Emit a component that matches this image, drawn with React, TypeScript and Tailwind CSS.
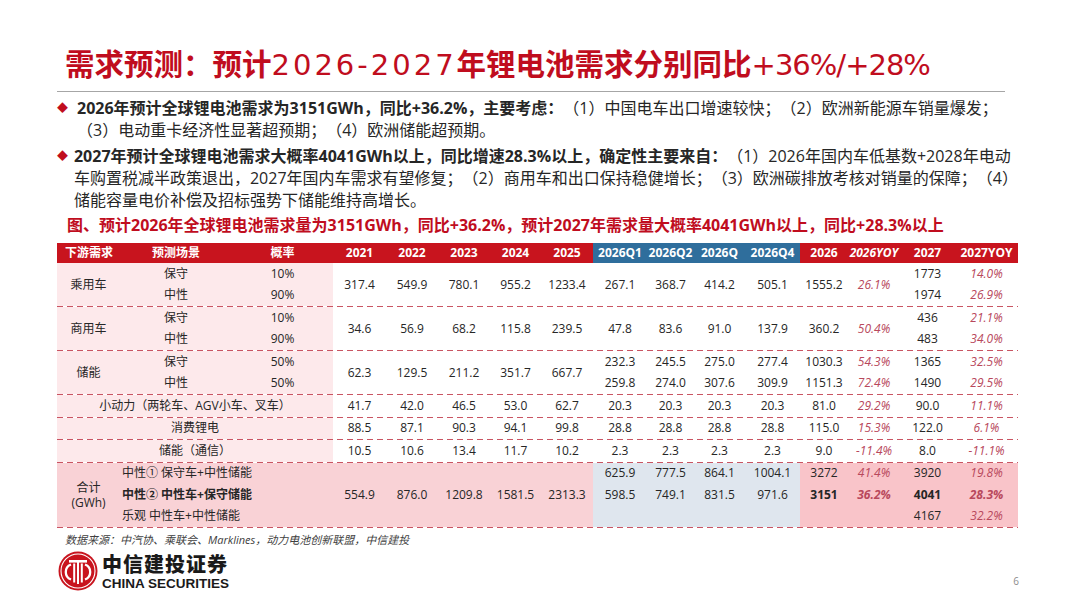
const header = [
  "下游需求", "预测场景", "概率", "2021", "2022", "2023", "2024", "2025",
  "2026Q1", "2026Q2", "2026Q", "2026Q4", "2026", "2026YOY", "2027", "2027YOY",
];

const widths = [
  "w-[63px]", "w-[112px]", "w-[101px]", "w-[53px]", "w-[52px]", "w-[52px]", "w-[51px]", "w-[52px]",
  "w-[54px]", "w-[47px]", "w-[51px]", "w-[55px]", "w-[48px]", "w-[52px]", "w-[55px]", "w-[63px]",
];

const label = "bg-[#fde9eb]";
const yoy = "italic text-[#b8485c]";
const row = "h-[21.5px]";

function Divider() {
  return (
    <tr>
      <td
        colSpan={16}
        className="p-0 h-px bg-[repeating-linear-gradient(90deg,#c95563_0_6px,transparent_6px_10px)]"
      />
    </tr>
  );
}

function Cell({ v, cls = "", span = 1 }: { v: string; cls?: string; span?: number }) {
  return (
    <td rowSpan={span} className={`p-0 text-center whitespace-nowrap ${cls}`}>
      {v}
    </td>
  );
}

function CarGroup({
  name,
  probs,
  merged,
  y27,
  yoy27,
}: {
  name: string;
  probs: string[];
  merged: string[];
  y27: string[];
  yoy27: string[];
}) {
  return (
    <>
      <tr className={row}>
        <Cell v={name} span={2} cls={label} />
        <Cell v="保守" cls={label} />
        <Cell v={probs[0]} cls={label} />
        {merged.map((m, i) => (
          <Cell key={i} v={m} span={2} cls={i === 10 ? yoy : ""} />
        ))}
        <Cell v={y27[0]} />
        <Cell v={yoy27[0]} cls={yoy} />
      </tr>
      <tr className={row}>
        <Cell v="中性" cls={label} />
        <Cell v={probs[1]} cls={label} />
        <Cell v={y27[1]} />
        <Cell v={yoy27[1]} cls={yoy} />
      </tr>
      <Divider />
    </>
  );
}

function SingleRow({ name, vals }: { name: string; vals: string[] }) {
  return (
    <>
      <tr className={row}>
        <td colSpan={3} className={`p-0 text-center ${label}`}>{name}</td>
        {vals.map((v, i) => (
          <Cell key={i} v={v} cls={i === 10 || i === 12 ? yoy : ""} />
        ))}
      </tr>
      <Divider />
    </>
  );
}

function Logo() {
  return (
    <svg width="42" height="40" viewBox="0 0 40 40">
      <circle cx="20" cy="20" r="19.5" fill="#c8141e" />
      <circle cx="20" cy="20" r="17" fill="none" stroke="#fff" strokeWidth="1.1" />
      <rect x="11" y="9" width="18" height="2.6" fill="#fff" />
      <rect x="15.2" y="12.5" width="2" height="19" fill="#fff" />
      <rect x="19" y="11" width="2" height="22" fill="#fff" />
      <rect x="22.8" y="12.5" width="2" height="19" fill="#fff" />
      <path d="M13 13.5 A8 8 0 0 0 13 28.5" fill="none" stroke="#fff" strokeWidth="2.3" />
      <path d="M27 13.5 A8 8 0 0 1 27 28.5" fill="none" stroke="#fff" strokeWidth="2.3" />
    </svg>
  );
}

export default function App() {
  return (
    <div className="w-[1080px] h-[608px] bg-white overflow-hidden flex flex-col pl-[57px] pr-[62px] font-['Open_Sans','Noto_Sans_CJK_SC',sans-serif] text-[#262626] [text-spacing-trim:space-all]">
      {/* title */}
      <h1 className="mt-[44px] ml-[8px] h-[36px] leading-[36px] text-[29.5px] font-bold text-[#c00d1e] whitespace-nowrap font-['Noto_Sans_CJK_SC',sans-serif]">
        需求预测：预计
        <span className="font-normal font-['DejaVu_Sans',sans-serif] text-[29px] tracking-[3px]">2026-2027</span>
        年锂电池需求分别同比
        <span className="font-normal font-['DejaVu_Sans',sans-serif] text-[29px] tracking-[-1px]">+36%/+28%</span>
      </h1>
      <div className="mt-[11px] w-[948px] h-px bg-[#a6a6a6]" />

      {/* bullets */}
      <div className="mt-[5px] flex">
        <span className="w-[20px] leading-[22px] text-[11px] text-[#c00d1e]">◆</span>
        <div className="text-[16px] leading-[22px] whitespace-nowrap">
          <div>
            <b>2026年预计全球锂电池需求为3151GWh，同比+36.2%，主要考虑：</b>
            （1）中国电车出口增速较快；（2）欧洲新能源车销量爆发；
          </div>
          <div>（3）电动重卡经济性显著超预期；（4）欧洲储能超预期。</div>
        </div>
      </div>
      <div className="mt-[4px] flex">
        <span className="w-[20px] leading-[22px] text-[11px] text-[#c00d1e]">◆</span>
        <div className="text-[16px] leading-[22px] whitespace-nowrap">
          <div>
            <b>2027年预计全球锂电池需求大概率4041GWh以上，同比增速28.3%以上，确定性主要来自：</b>
            （1）2026年国内车低基数+2028年电动
          </div>
          <div>
            车购置税减半政策退出，2027年国内车需求有望修复；（2）商用车和出口保持稳健增长；（3）欧洲碳排放考核对销量的保障；（4）
          </div>
          <div>储能容量电价补偿及招标强势下储能维持高增长。</div>
        </div>
      </div>
      <div className="mt-[3px] ml-[10px] text-[16px] leading-[22px] font-bold text-[#c00d1e] whitespace-nowrap">
        图、预计2026年全球锂电池需求量为3151GWh，同比+36.2%，预计2027年需求量大概率4041GWh以上，同比+28.3%以上
      </div>

      {/* table */}
      <table className="mt-[7px] w-[961px] table-fixed border-collapse text-[12px] leading-none">
        <colgroup>
          {widths.map((w, i) => (
            <col key={i} className={w} />
          ))}
        </colgroup>
        <thead>
          <tr className="h-[20px] text-white font-bold">
            {header.map((h, i) => (
              <th
                key={i}
                className={`p-0 font-bold whitespace-nowrap overflow-hidden ${
                  i >= 8 && i <= 11 ? "bg-[#2f6e9c]" : "bg-[#c8141e]"
                } ${i === 0 ? "text-left pl-[8px]" : "text-center"} ${i === 13 ? "italic text-clip" : ""}`}
              >
                {h}
              </th>
            ))}
          </tr>
        </thead>
        <tbody>
          <CarGroup
            name="乘用车"
            probs={["10%", "90%"]}
            merged={["317.4", "549.9", "780.1", "955.2", "1233.4", "267.1", "368.7", "414.2", "505.1", "1555.2", "26.1%"]}
            y27={["1773", "1974"]}
            yoy27={["14.0%", "26.9%"]}
          />
          <CarGroup
            name="商用车"
            probs={["10%", "90%"]}
            merged={["34.6", "56.9", "68.2", "115.8", "239.5", "47.8", "83.6", "91.0", "137.9", "360.2", "50.4%"]}
            y27={["436", "483"]}
            yoy27={["21.1%", "34.0%"]}
          />

          {/* 储能 */}
          <tr className={row}>
            <Cell v="储能" span={2} cls={label} />
            <Cell v="保守" cls={label} />
            <Cell v="50%" cls={label} />
            {["62.3", "129.5", "211.2", "351.7", "667.7"].map((m, i) => (
              <Cell key={i} v={m} span={2} />
            ))}
            {["232.3", "245.5", "275.0", "277.4", "1030.3", "54.3%", "1365", "32.5%"].map((m, i) => (
              <Cell key={i} v={m} cls={i === 5 || i === 7 ? yoy : ""} />
            ))}
          </tr>
          <tr className={row}>
            <Cell v="中性" cls={label} />
            <Cell v="50%" cls={label} />
            {["259.8", "274.0", "307.6", "309.9", "1151.3", "72.4%", "1490", "29.5%"].map((m, i) => (
              <Cell key={i} v={m} cls={i === 5 || i === 7 ? yoy : ""} />
            ))}
          </tr>
          <Divider />

          <SingleRow
            name="小动力（两轮车、AGV小车、叉车）"
            vals={["41.7", "42.0", "46.5", "53.0", "62.7", "20.3", "20.3", "20.3", "20.3", "81.0", "29.2%", "90.0", "11.1%"]}
          />
          <SingleRow
            name="消费锂电"
            vals={["88.5", "87.1", "90.3", "94.1", "99.8", "28.8", "28.8", "28.8", "28.8", "115.0", "15.3%", "122.0", "6.1%"]}
          />
          <SingleRow
            name="储能（通信）"
            vals={["10.5", "10.6", "13.4", "11.7", "10.2", "2.3", "2.3", "2.3", "2.3", "9.0", "-11.4%", "8.0", "-11.1%"]}
          />

          {/* 合计 */}
          <tr className={row}>
            <td rowSpan={3} className="p-0 text-center bg-[#f9d2d6] leading-[15px]">
              合计
              <br />
              (GWh)
            </td>
            <td colSpan={2} className="p-0 pl-[2px] bg-[#f9d2d6] whitespace-nowrap">中性① 保守车+中性储能</td>
            {["554.9", "876.0", "1209.8", "1581.5", "2313.3"].map((m, i) => (
              <Cell key={i} v={m} span={3} cls="bg-[#f9d2d6]" />
            ))}
            {["625.9", "777.5", "864.1", "1004.1"].map((m, i) => (
              <Cell key={i} v={m} cls="bg-[#dfe6ee]" />
            ))}
            <Cell v="3272" cls="bg-[#f9c4c9]" />
            <Cell v="41.4%" cls={`bg-[#f9c4c9] ${yoy}`} />
            <Cell v="3920" cls="bg-[#f9c4c9]" />
            <Cell v="19.8%" cls={`bg-[#f9c4c9] ${yoy}`} />
          </tr>
          <tr className={row}>
            <td colSpan={2} className="p-0 pl-[2px] bg-[#f9d2d6] font-bold whitespace-nowrap">中性② 中性车+保守储能</td>
            {["598.5", "749.1", "831.5", "971.6"].map((m, i) => (
              <Cell key={i} v={m} cls="bg-[#dfe6ee]" />
            ))}
            <Cell v="3151" cls="bg-[#f9c4c9] font-bold" />
            <Cell v="36.2%" cls={`bg-[#f9c4c9] font-bold ${yoy}`} />
            <Cell v="4041" cls="bg-[#f9c4c9] font-bold" />
            <Cell v="28.3%" cls={`bg-[#f9c4c9] font-bold ${yoy}`} />
          </tr>
          <tr className={row}>
            <td colSpan={2} className="p-0 pl-[2px] bg-[#f9d2d6] whitespace-nowrap">乐观 中性车+中性储能</td>
            {[0, 1, 2, 3].map((i) => (
              <Cell key={i} v="" cls="bg-[#dfe6ee]" />
            ))}
            <Cell v="" cls="bg-[#f9c4c9]" />
            <Cell v="" cls="bg-[#f9c4c9]" />
            <Cell v="4167" cls="bg-[#f9c4c9]" />
            <Cell v="32.2%" cls={`bg-[#f9c4c9] ${yoy}`} />
          </tr>
          <Divider />
        </tbody>
      </table>

      {/* footer */}
      <div className="mt-[4px] ml-[8px] text-[11px] leading-[16px] italic text-[#404040] whitespace-nowrap">
        数据来源：中汽协、乘联会、Marklines，动力电池创新联盟，中信建投
      </div>
      <div className="mt-[3px] flex items-end justify-between">
        <div className="flex items-center gap-[3px]">
          <Logo />
          <div className="flex flex-col">
            <span className="text-[20px] leading-[25px] font-black tracking-[1px] text-[#1a1a1a] font-['Noto_Sans_CJK_SC',sans-serif]">
              中信建投证券
            </span>
            <span className="text-[13.5px] leading-[15px] font-semibold text-[#1a1a1a] font-['Liberation_Sans',sans-serif]">
              CHINA SECURITIES
            </span>
          </div>
        </div>
        <span className="mb-[4px] mr-[-1px] text-[10px] leading-[12px] text-[#8c8c8c]">6</span>
      </div>
    </div>
  );
}
